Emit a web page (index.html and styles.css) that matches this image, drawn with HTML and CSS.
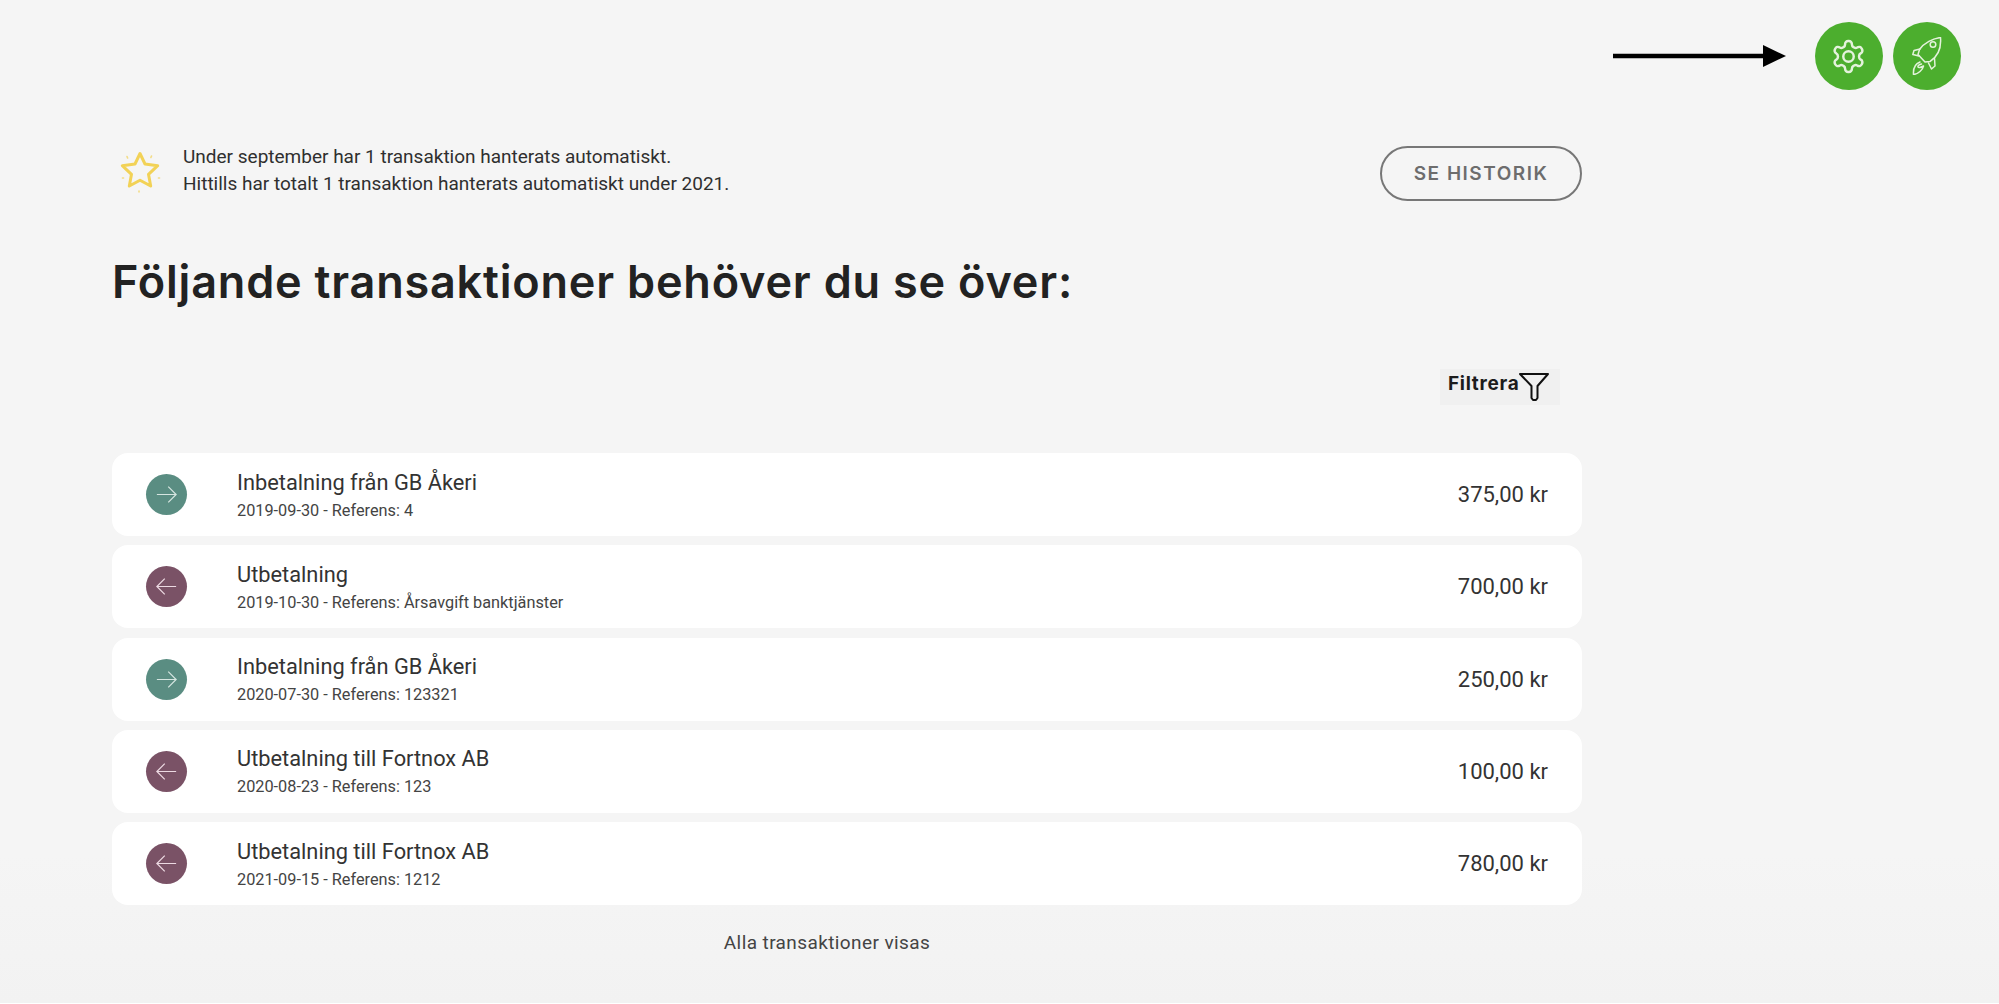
FILE: index.html
```html
<!DOCTYPE html>
<html lang="sv">
<head>
  <meta charset="UTF-8" />
  <meta name="viewport" content="width=device-width, initial-scale=1.0" />
  <title>Transaktioner</title>
  <link rel="stylesheet" href="styles.css">
</head>
<body>
  <header class="topbar">
    <svg class="pointer" viewBox="0 0 173 24"><path d="M0 12h150" stroke="#000" stroke-width="4.5"/><path d="M150 1l23 11-23 11z" fill="#000"/></svg>
    <button class="round-btn">
      <svg class="gear" viewBox="0 0 24 24"><path d="M12.22 2h-.44a2 2 0 0 0-2 2v.18a2 2 0 0 1-1 1.73l-.43.25a2 2 0 0 1-2 0l-.15-.08a2 2 0 0 0-2.73.73l-.22.38a2 2 0 0 0 .73 2.73l.15.1a2 2 0 0 1 1 1.72v.51a2 2 0 0 1-1 1.74l-.15.09a2 2 0 0 0-.73 2.73l.22.38a2 2 0 0 0 2.73.73l.15-.08a2 2 0 0 1 2 0l.43.25a2 2 0 0 1 1 1.73V20a2 2 0 0 0 2 2h.44a2 2 0 0 0 2-2v-.18a2 2 0 0 1 1-1.73l.43-.25a2 2 0 0 1 2 0l.15.08a2 2 0 0 0 2.73-.73l.22-.39a2 2 0 0 0-.73-2.73l-.15-.08a2 2 0 0 1-1-1.74v-.5a2 2 0 0 1 1-1.74l.15-.09a2 2 0 0 0 .73-2.73l-.22-.38a2 2 0 0 0-2.73-.73l-.15.08a2 2 0 0 1-2 0l-.43-.25a2 2 0 0 1-1-1.73V4a2 2 0 0 0-2-2z"/><circle cx="12" cy="12" r="3.4"/></svg>
    </button>
    <button class="round-btn">
      <svg class="rocket" viewBox="0 0 30 38"><path d="M28.500.5C21 1.500 12 6 7.500 12.500L6 17.500l7 7.500 5-.5c7-4.500 11.500-12.500 10.500-24z"/><circle cx="21" cy="7.500" r="2.800"/><path d="M8 12l-6 1.500L.8 17.500 7 19M22.500 21.500l.5 7.500-3.500 3-3-6"/><path d="M8 25c-4 1.500-7 6-6.500 12.500 5-.5 9-4.500 10-8.500-2.500 1.500-5 2-5.500 1-.5-1.500 1.500-2.500 3.500-3"/></svg>
    </button>
  </header>

  <main class="content">
    <section class="summary">
      <svg class="star" viewBox="0 0 48 48"><path class="star-outline" d="M23 3.500l5 10.500 12.700 1.700-9.200 8.600 2.200 11.700L23 30.200l-10.700 5.800 2.200-11.700-9.200-8.600L18 14z"/><path class="sparks" d="M10 6.500l.6 1.500M34.500 6l-.6 1.500M5.500 28h1M41.500 28h1M22 41v1"/></svg>
      <p class="summary-text">Under september har 1 transaktion hanterats automatiskt.<br>Hittills har totalt 1 transaktion hanterats automatiskt under 2021.</p>
      <button class="outline-btn">SE HISTORIK</button>
    </section>

    <h1>Följande transaktioner behöver du se över:</h1>

    <div class="filter-row">
      <button class="filter-btn">Filtrera
        <svg viewBox="0 0 30 29"><path d="M1 2h28L18.500 14v12l-1.500 2h-3l-1.500-2V14z"/></svg>
      </button>
    </div>

    <ul class="tx-list">
      <li class="tx-card">
        <span class="tx-icon in"><svg viewBox="0 0 24 24"><path d="M1 12h22M14 3l9 9-9 9"/></svg></span>
        <div class="tx-info"><div class="tx-title">Inbetalning från GB Åkeri</div><div class="tx-sub">2019-09-30 - Referens: 4</div></div>
        <div class="tx-amount">375,00 kr</div>
      </li>
      <li class="tx-card">
        <span class="tx-icon out"><svg viewBox="0 0 24 24"><path d="M23 12H1M10 3l-9 9 9 9"/></svg></span>
        <div class="tx-info"><div class="tx-title">Utbetalning</div><div class="tx-sub">2019-10-30 - Referens: Årsavgift banktjänster</div></div>
        <div class="tx-amount">700,00 kr</div>
      </li>
      <li class="tx-card">
        <span class="tx-icon in"><svg viewBox="0 0 24 24"><path d="M1 12h22M14 3l9 9-9 9"/></svg></span>
        <div class="tx-info"><div class="tx-title">Inbetalning från GB Åkeri</div><div class="tx-sub">2020-07-30 - Referens: 123321</div></div>
        <div class="tx-amount">250,00 kr</div>
      </li>
      <li class="tx-card">
        <span class="tx-icon out"><svg viewBox="0 0 24 24"><path d="M23 12H1M10 3l-9 9 9 9"/></svg></span>
        <div class="tx-info"><div class="tx-title">Utbetalning till Fortnox AB</div><div class="tx-sub">2020-08-23 - Referens: 123</div></div>
        <div class="tx-amount">100,00 kr</div>
      </li>
      <li class="tx-card">
        <span class="tx-icon out"><svg viewBox="0 0 24 24"><path d="M23 12H1M10 3l-9 9 9 9"/></svg></span>
        <div class="tx-info"><div class="tx-title">Utbetalning till Fortnox AB</div><div class="tx-sub">2021-09-15 - Referens: 1212</div></div>
        <div class="tx-amount">780,00 kr</div>
      </li>
    </ul>

    <p class="all-shown">Alla transaktioner visas</p>
  </main>
</body>
</html>
```

FILE: styles.css
```css
* {
  box-sizing: border-box;
}
html, body {
  height: 100%;
}
body {
  margin: 0;
  font-family: Roboto, sans-serif;
  color: #2a2a2a;
  background: linear-gradient(#f5f5f5 85%, #f2f2f2);
  border-bottom: 1px solid #fff;
  overflow: hidden;
}
button {
  font-family: inherit;
  cursor: pointer;
}

.topbar {
  display: flex;
  justify-content: flex-end;
  align-items: center;
  gap: 10px;
  padding: 22px 38px 0 0;
}
.pointer {
  width: 173px;
  height: 24px;
  margin-right: 19px;
}
.round-btn {
  display: flex;
  align-items: center;
  justify-content: center;
  width: 68px;
  height: 68px;
  padding: 0;
  border: none;
  border-radius: 50%;
  background-color: #4cae2e;
}
.round-btn svg {
  fill: none;
  stroke: #e4f2dc;
  stroke-linejoin: round;
  stroke-linecap: round;
}
.gear {
  width: 37px;
  height: 37px;
  margin-right: 2px;
  stroke-width: 1.6;
}
.rocket {
  width: 30px;
  height: 38px;
  stroke-width: 1.5;
}

.content {
  width: 1470px;
  margin-left: 112px;
}
.summary {
  display: flex;
  align-items: flex-start;
  height: 55px;
  margin-top: 56px;
}
.star {
  width: 48px;
  height: 48px;
  margin: 4px 18px 0 5px;
  fill: none;
  stroke: #f2d257;
  stroke-linejoin: round;
  stroke-linecap: round;
}
.star-outline {
  stroke-width: 3;
}
.sparks {
  stroke-width: 1.6;
  opacity: .7;
}
.summary-text {
  flex: 1;
  margin: -3px 0 0;
  font-size: 19px;
  line-height: 27px;
  color: #2f2f2f;
}
.outline-btn {
  width: 202px;
  height: 55px;
  border: 2px solid #777;
  border-radius: 28px;
  background: none;
  font-family: Inter, sans-serif;
  font-size: 19px;
  font-weight: 600;
  letter-spacing: 1.5px;
  color: #6d6d6d;
}

h1 {
  margin: 54px 0 0;
  font-family: Inter, sans-serif;
  font-size: 45px;
  line-height: 54px;
  font-weight: 600;
  letter-spacing: .8px;
  color: #222;
}

.filter-row {
  display: flex;
  justify-content: flex-end;
  margin-top: 59.5px;
  padding-right: 22px;
}
.filter-btn {
  display: flex;
  align-items: flex-start;
  width: 120px;
  height: 36px;
  padding: 3px 0 0 8px;
  border: none;
  background-color: #f0f0f0;
  font-family: Inter, sans-serif;
  font-size: 19px;
  font-weight: 700;
  letter-spacing: .7px;
  color: #1c1c1c;
}
.filter-btn svg {
  width: 30px;
  height: 29px;
  fill: none;
  stroke: #111;
  stroke-width: 2;
  stroke-linejoin: round;
}

.tx-list {
  display: flex;
  flex-direction: column;
  gap: 9.25px;
  margin: 48.5px 0 0;
  padding: 0;
  list-style: none;
}
.tx-card {
  display: flex;
  align-items: center;
  height: 83px;
  padding: 0 34px;
  border-radius: 16px;
  background-color: #fff;
}
.tx-icon {
  display: flex;
  align-items: center;
  justify-content: center;
  width: 41px;
  height: 41px;
  margin-right: 50px;
  border-radius: 50%;
}
.tx-icon svg {
  width: 21px;
  height: 21px;
  fill: none;
  stroke-width: 1.4;
}
.tx-icon.in {
  background-color: #5a8d82;
}
.tx-icon.in svg {
  stroke: #d5e5e0;
}
.tx-icon.out {
  background-color: #7a5266;
}
.tx-icon.out svg {
  stroke: #ecd9e2;
}
.tx-info {
  flex: 1;
}
.tx-title {
  font-size: 21.8px;
  line-height: 27px;
  color: #333;
}
.tx-sub {
  margin-top: 5px;
  font-size: 16.3px;
  line-height: 20px;
  color: #444;
}
.tx-amount {
  font-size: 22px;
  color: #333;
}

.all-shown {
  margin: 26px 40px 0 0;
  font-size: 19px;
  line-height: 24px;
  letter-spacing: .4px;
  text-align: center;
  color: #444;
}
```
